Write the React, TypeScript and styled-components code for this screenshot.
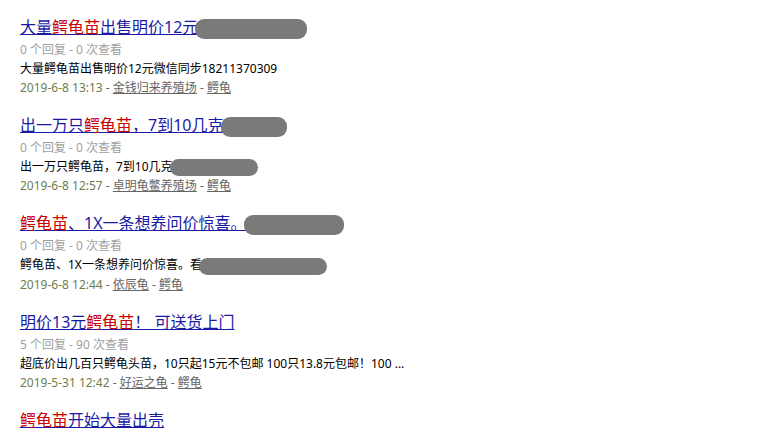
import React from 'react';
import styled, { createGlobalStyle } from 'styled-components';

type Part = { text: string; hot?: boolean };

type Result = {
  title: Array<Part>;
  titleMask?: number;
  replies?: number;
  views?: number;
  summary?: string;
  summaryMask?: number;
  date?: string;
  author?: string;
  forum?: string;
};

const GlobalStyle = createGlobalStyle`
  body {
    margin: 0;
    background: #fff;
    font-family: "Noto Sans", "Noto Sans CJK SC", sans-serif;
  }
`;

const List = styled.ul`
  list-style: none;
  margin: 0;
  padding: 15px 20px 0;
`;

const Item = styled.li`
  margin-bottom: 16px;
`;

const Title = styled.h3`
  margin: 0;
  font-size: 16px;
  font-weight: normal;
  line-height: 25px;
  white-space: nowrap;
  a {
    color: #1a1aa6;
    text-decoration: underline;
  }
`;

const Hot = styled.em`
  font-style: normal;
  color: #cc0000;
`;

const Line = styled.p<{ $tone?: 'muted' | 'date' }>`
  margin: 0;
  font-size: 12px;
  line-height: 19px;
  white-space: nowrap;
  color: ${(p) => (p.$tone === 'muted' ? '#a0a0a0' : p.$tone === 'date' ? '#6f7d4c' : '#000')};
  a {
    color: #666;
    text-decoration: underline;
  }
`;

const Sep = styled.span`
  color: #666;
`;

// the grey smudges that hide contact info in the screenshot
const Mask = styled.span<{ $h: number }>`
  display: inline-block;
  vertical-align: middle;
  height: ${(p) => p.$h}px;
  margin-left: -3px;
  background: #7a7a7a;
  border-radius: 9px;
`;

const results: Array<Result> = [
  {
    title: [{ text: '大量' }, { text: '鳄龟苗', hot: true }, { text: '出售明价12元' }],
    titleMask: 112,
    replies: 0,
    views: 0,
    summary: '大量鳄龟苗出售明价12元微信同步18211370309',
    date: '2019-6-8 13:13',
    author: '金钱归来养殖场',
    forum: '鳄龟',
  },
  {
    title: [{ text: '出一万只' }, { text: '鳄龟苗', hot: true }, { text: '，7到10几克' }],
    titleMask: 66,
    replies: 0,
    views: 0,
    summary: '出一万只鳄龟苗，7到10几克',
    summaryMask: 88,
    date: '2019-6-8 12:57',
    author: '卓明龟鳖养殖场',
    forum: '鳄龟',
  },
  {
    title: [{ text: '鳄龟苗', hot: true }, { text: '、1X一条想养问价惊喜。' }],
    titleMask: 100,
    replies: 0,
    views: 0,
    summary: '鳄龟苗、1X一条想养问价惊喜。看',
    summaryMask: 128,
    date: '2019-6-8 12:44',
    author: '依辰龟',
    forum: '鳄龟',
  },
  {
    title: [{ text: '明价13元' }, { text: '鳄龟苗', hot: true }, { text: '！ 可送货上门' }],
    replies: 5,
    views: 90,
    summary: '超底价出几百只鳄龟头苗，10只起15元不包邮 100只13.8元包邮！100 ...',
    date: '2019-5-31 12:42',
    author: '好运之龟',
    forum: '鳄龟',
  },
  {
    title: [{ text: '鳄龟苗', hot: true }, { text: '开始大量出壳' }],
  },
];

export default function App() {
  return (
    <>
      <GlobalStyle />
      <List>
        {results.map((r, i) => (
          <Item key={i}>
            <Title>
              <a href="#">
                {r.title.map((p, j) => (p.hot ? <Hot key={j}>{p.text}</Hot> : <span key={j}>{p.text}</span>))}
              </a>
              {r.titleMask ? <Mask $h={20} style={{ width: r.titleMask }} /> : null}
            </Title>
            {r.date ? (
              <>
                <Line $tone="muted">
                  {r.replies} 个回复 - {r.views} 次查看
                </Line>
                <Line>
                  {r.summary}
                  {r.summaryMask ? <Mask $h={17} style={{ width: r.summaryMask }} /> : null}
                </Line>
                <Line $tone="date">
                  {r.date} <Sep>-</Sep> <a href="#">{r.author}</a> <Sep>-</Sep> <a href="#">{r.forum}</a>
                </Line>
              </>
            ) : null}
          </Item>
        ))}
      </List>
    </>
  );
}
